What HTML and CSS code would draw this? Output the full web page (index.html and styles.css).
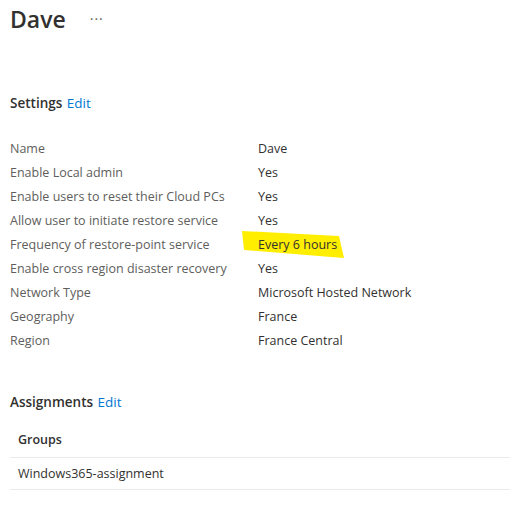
FILE: index.html
```html
<!DOCTYPE html>
<html>
<head>
    <meta charset="UTF-8">
    <title>Dave</title>
    <link rel="stylesheet" href="styles.css">
</head>
<body>
<div class="page">
    <div class="title-bar">
        <h1 class="title">Dave</h1>
        <span class="more">&middot;&middot;&middot;</span>
    </div>

    <h2 class="section-title">Settings <a class="edit" href="#">Edit</a></h2>
    <div class="props">
        <div class="prop"><span class="label">Name</span><span class="value">Dave</span></div>
        <div class="prop"><span class="label">Enable Local admin</span><span class="value">Yes</span></div>
        <div class="prop"><span class="label">Enable users to reset their Cloud PCs</span><span class="value">Yes</span></div>
        <div class="prop"><span class="label">Allow user to initiate restore service</span><span class="value">Yes</span></div>
        <div class="prop">
            <span class="label">Frequency of restore-point service</span>
            <span class="value marked">
                <svg class="marker" width="112" height="32" viewBox="0 0 112 32">
                    <polygon points="6,2 103,7 108,29 8,21" fill="#ffee00"/>
                </svg>
                <span class="marked-text">Every 6 hours</span>
            </span>
        </div>
        <div class="prop"><span class="label">Enable cross region disaster recovery</span><span class="value">Yes</span></div>
        <div class="prop"><span class="label">Network Type</span><span class="value">Microsoft Hosted Network</span></div>
        <div class="prop"><span class="label">Geography</span><span class="value">France</span></div>
        <div class="prop"><span class="label">Region</span><span class="value">France Central</span></div>
    </div>

    <h2 class="section-title assignments">Assignments <a class="edit" href="#">Edit</a></h2>
    <table class="groups">
        <tr><th>Groups</th></tr>
        <tr><td>Windows365-assignment</td></tr>
    </table>
</div>
</body>
</html>
```

FILE: styles.css
```css
body {
    margin: 0;
    background-color: #fff;
    font-family: "Open Sans", "Noto Sans", sans-serif;
    color: #323130;
}
.page {
    padding: 0 11px 0 10px;
}
.title-bar {
    display: flex;
    align-items: center;
    height: 37px;
}
.title {
    margin: 0;
    font-size: 23px;
    font-weight: 600;
    color: #323130;
}
.more {
    margin-left: 24px;
    font-size: 14px;
    color: #605e5c;
    letter-spacing: 1px;
}
.section-title {
    margin: 55px 0 0 0;
    font-size: 13.5px;
    font-weight: 600;
    color: #323130;
    line-height: 22px;
}
.edit {
    color: #0078d4;
    font-weight: 400;
    text-decoration: none;
    margin-left: 1px;
}
.props {
    margin-top: 22px;
}
.prop {
    display: flex;
    height: 24px;
    align-items: center;
    font-size: 12.5px;
}
.label {
    width: 248px;
    color: #605e5c;
}
.value {
    color: #323130;
}
.marked {
    position: relative;
}
.marker {
    position: absolute;
    left: -22px;
    top: -7px;
}
.marked-text {
    position: relative;
}
.assignments {
    margin-top: 39px;
}
.groups {
    margin-top: 8px;
    width: 100%;
    border-collapse: collapse;
    font-size: 12.5px;
}
.groups th,
.groups td {
    text-align: left;
    padding: 0 8px;
    height: 31px;
    border-bottom: 1px solid #edebe9;
}
.groups th {
    font-weight: 600;
    height: 36px;
}
```
